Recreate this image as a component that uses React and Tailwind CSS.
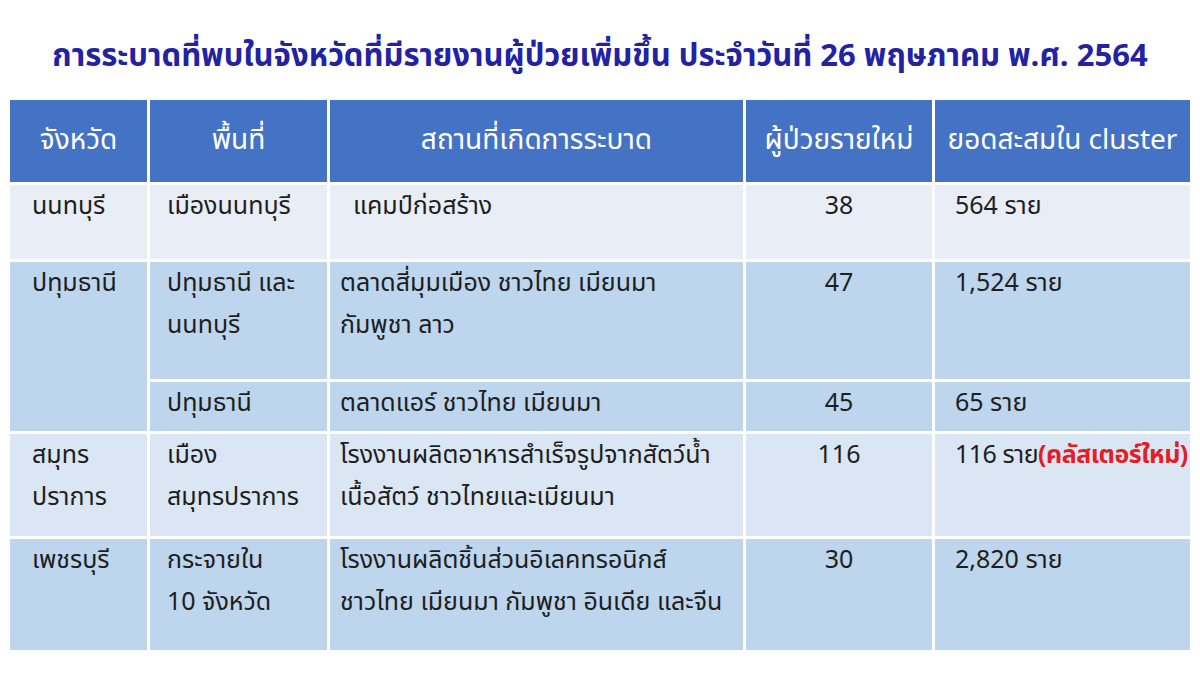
import React from "react";

const font = { fontFamily: '"Tahoma", "Leelawadee UI", "Noto Sans Thai", "Loma", "Garuda", "Noto Sans", sans-serif' };

const LIGHT = "bg-[#e9edf6]";
const MID = "bg-[#dae6f3]";
const DARK = "bg-[#bdd5ed]";

function Cell({ className = "", children }) {
  return (
    <div className={`text-[25px] leading-[42px] text-[#1e1e1e] ${className}`}>{children}</div>
  );
}

function Head({ children, className = "" }) {
  return (
    <div className={`bg-[#4472c4] text-white text-[28px] flex items-center justify-center ${className}`}>
      {children}
    </div>
  );
}

export default function App() {
  return (
    <div className="w-[1200px] h-[675px] bg-white overflow-hidden" style={font}>
      <h1 className="pt-[36px] h-[100px] text-center text-[31px] font-bold text-[#2222a3] leading-[42px] whitespace-nowrap">
        การระบาดที่พบในจังหวัดที่มีรายงานผู้ป่วยเพิ่มขึ้น ประจำวันที่ 26 พฤษภาคม พ.ศ. 2564
      </h1>
      <div className="ml-[10px] w-[1180px] grid grid-cols-[137px_177px_413px_186px_255px] grid-rows-[82px_74px_117px_49px_102px_111px] gap-[3px]">
        <Head>จังหวัด</Head>
        <Head>พื้นที่</Head>
        <Head>สถานที่เกิดการระบาด</Head>
        <Head>ผู้ป่วยรายใหม่</Head>
        <Head>ยอดสะสมใน cluster</Head>

        <Cell className={`${LIGHT} pl-[22px]`}>นนทบุรี</Cell>
        <Cell className={`${LIGHT} pl-[17px]`}>เมืองนนทบุรี</Cell>
        <Cell className={`${LIGHT} pl-[23px]`}>แคมป์ก่อสร้าง</Cell>
        <Cell className={`${LIGHT} text-center`}>38</Cell>
        <Cell className={`${LIGHT} pl-[20px]`}>564 ราย</Cell>

        <Cell className={`${DARK} row-span-2 pl-[22px]`}>ปทุมธานี</Cell>
        <Cell className={`${DARK} pl-[17px]`}>ปทุมธานี และ<br />นนทบุรี</Cell>
        <Cell className={`${DARK} pl-[10px]`}>ตลาดสี่มุมเมือง ชาวไทย เมียนมา<br />กัมพูชา ลาว</Cell>
        <Cell className={`${DARK} text-center`}>47</Cell>
        <Cell className={`${DARK} pl-[20px]`}>1,524 ราย</Cell>

        <Cell className={`${DARK} pl-[17px]`}>ปทุมธานี</Cell>
        <Cell className={`${DARK} pl-[10px]`}>ตลาดแอร์ ชาวไทย เมียนมา</Cell>
        <Cell className={`${DARK} text-center`}>45</Cell>
        <Cell className={`${DARK} pl-[20px]`}>65 ราย</Cell>

        <Cell className={`${MID} pl-[22px]`}>สมุทร<br />ปราการ</Cell>
        <Cell className={`${MID} pl-[17px]`}>เมือง<br />สมุทรปราการ</Cell>
        <Cell className={`${MID} pl-[10px] whitespace-nowrap`}>โรงงานผลิตอาหารสำเร็จรูปจากสัตว์น้ำ<br />เนื้อสัตว์ ชาวไทยและเมียนมา</Cell>
        <Cell className={`${MID} text-center`}>116</Cell>
        <Cell className={`${MID} pl-[20px] whitespace-nowrap tracking-[-0.5px]`}>
          116 ราย<span className="text-[#e31e24] font-bold">(คลัสเตอร์ใหม่)</span>
        </Cell>

        <Cell className={`${DARK} pl-[22px]`}>เพชรบุรี</Cell>
        <Cell className={`${DARK} pl-[17px]`}>กระจายใน<br />10 จังหวัด</Cell>
        <Cell className={`${DARK} pl-[10px] whitespace-nowrap`}>โรงงานผลิตชิ้นส่วนอิเลคทรอนิกส์<br />ชาวไทย เมียนมา กัมพูชา อินเดีย และจีน</Cell>
        <Cell className={`${DARK} text-center`}>30</Cell>
        <Cell className={`${DARK} pl-[20px]`}>2,820 ราย</Cell>
      </div>
    </div>
  );
}
